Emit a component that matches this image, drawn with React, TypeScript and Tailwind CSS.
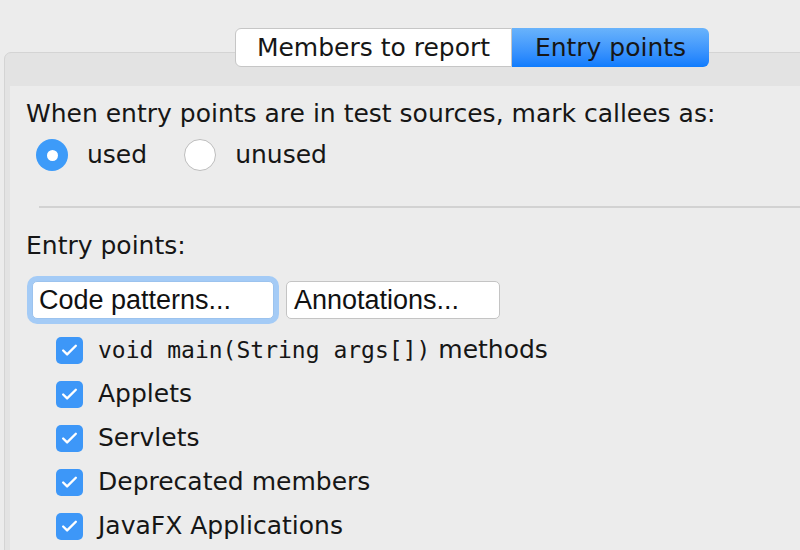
import { Check } from 'lucide-react'

const sans = { fontFamily: '"DejaVu Sans", "Noto Sans", sans-serif' }

function Radio({ checked, label }: { checked: boolean; label: string }) {
    return (
        <div className="flex items-center">
            {checked ? (
                <div className="w-[32px] h-[32px] rounded-full bg-[#3d9bf9] flex items-center justify-center">
                    <div className="w-[11px] h-[11px] rounded-full bg-white"></div>
                </div>
            ) : (
                <div className="w-[32px] h-[32px] rounded-full bg-white border border-[#bdbdbd]"></div>
            )}
            <span className="ml-[19px] text-[25px] text-[#161616]">{label}</span>
        </div>
    )
}

function CheckRow({ children }: { children: React.ReactNode }) {
    return (
        <div className="flex items-center h-[44px]">
            <div className="w-[27px] h-[27px] rounded-[5px] bg-[#3d97f8] flex items-center justify-center ml-[30px]">
                <Check className="w-[19px] h-[19px] text-white" strokeWidth={3} />
            </div>
            <span className="ml-[15px] text-[25px] text-[#161616]">{children}</span>
        </div>
    )
}

export default function App() {
    return (
        <div className="w-[800px] h-[550px] overflow-hidden bg-[#ececec] pt-[28px]" style={sans}>
            {/* tabs */}
            <div className="relative z-10 flex ml-[235px] h-[39px]">
                <div className="w-[277px] h-[39px] bg-white border border-[#c6c6c6] rounded-l-[6px] flex items-center justify-center text-[25px] text-[#161616]">
                    Members to report
                </div>
                <div className="w-[197px] h-[39px] rounded-r-[6px] bg-gradient-to-b from-[#69b3fb] to-[#0d7cfd] flex items-center justify-center text-[25px] text-[#161616]">
                    Entry points
                </div>
            </div>

            {/* panel */}
            <div className="-mt-[15px] ml-[4px] w-[940px] h-[520px] bg-[#e3e3e3] border border-[#d4d4d4] rounded-[7px] pt-[33px] pl-[5px]">
                <div className="bg-[#ececec] h-full pl-[16px] pt-[7px]">
                    <div className="h-[42px] leading-[42px] text-[25px] text-[#161616]">
                        When entry points are in test sources, mark callees as:
                    </div>
                    <div className="flex items-center h-[40px] ml-[10px] gap-[37px]">
                        <Radio checked label="used" />
                        <Radio checked={false} label="unused" />
                    </div>
                    <div className="h-[2px] bg-[#d2d2d2] ml-[13px] mt-[31px]"></div>
                    <div className="h-[42px] leading-[42px] mt-[17px] text-[25px] text-[#161616]">
                        Entry points:
                    </div>
                    <div className="flex items-center gap-[12px] ml-[6px] mt-[14px]" style={{ fontFamily: '"Liberation Sans", Arial, sans-serif' }}>
                        <button className="w-[242px] h-[38px] bg-white rounded-[5px] border border-[#9cc3ee] shadow-[0_0_0_5px_#a4cbf6] text-left pl-[6px] text-[27px] leading-[36px] text-[#111]">
                            Code patterns...
                        </button>
                        <button className="w-[214px] h-[38px] bg-white rounded-[5px] border border-[#c4c4c4] text-left pl-[7px] text-[27px] leading-[36px] text-[#111]">
                            Annotations...
                        </button>
                    </div>
                    <div className="mt-[9px]">
                        <CheckRow>
                            <span style={{ fontFamily: '"DejaVu Sans Mono", "Liberation Mono", monospace' }} className="text-[23px]">
                                void main(String args[])
                            </span>{' '}
                            methods
                        </CheckRow>
                        <CheckRow>Applets</CheckRow>
                        <CheckRow>Servlets</CheckRow>
                        <CheckRow>Deprecated members</CheckRow>
                        <CheckRow>JavaFX Applications</CheckRow>
                    </div>
                </div>
            </div>
        </div>
    )
}
